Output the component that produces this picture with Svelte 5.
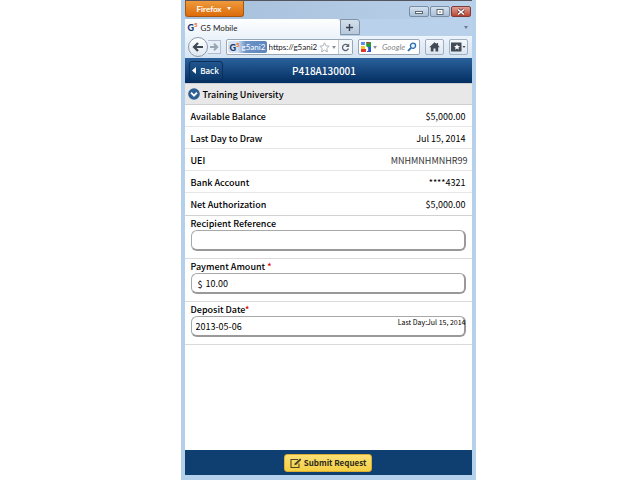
<script lang="ts">
  const details = [
    { label: 'Available Balance', value: '$5,000.00' },
    { label: 'Last Day to Draw', value: 'Jul 15, 2014' },
    { label: 'UEI', value: 'MNHMNHMNHR99', plain: true },
    { label: 'Bank Account', value: '****4321' },
    { label: 'Net Authorization', value: '$5,000.00' }
  ];

  let reference = $state('');
  let amount = $state('10.00');
  let depositDate = $state('2013-05-06');
  let query = $state('');
</script>

<div class="window">
  <div class="titlebar">
    <button class="firefox">Firefox <span class="caret light"></span></button>
    <div class="controls">
      <button aria-label="Minimize">
        <svg width="20" height="10" viewBox="0 0 20 10"><rect x="6.5" y="4.5" width="7" height="2" fill="#fff" stroke="#5d6875" /></svg>
      </button>
      <button aria-label="Maximize">
        <svg width="20" height="10" viewBox="0 0 20 10"><rect x="7" y="2.5" width="6" height="5" fill="#fff" stroke="#5d6875" /><rect x="9" y="4.5" width="2" height="1" fill="#5d6875" /></svg>
      </button>
      <button class="close" aria-label="Close">
        <svg width="20" height="10" viewBox="0 0 20 10"><path d="M7 2.5l6 5M13 2.5l-6 5" stroke="#6b3a3a" stroke-width="3" /><path d="M7 2.5l6 5M13 2.5l-6 5" stroke="#fff" stroke-width="1.6" /></svg>
      </button>
    </div>
  </div>

  <div class="tabs">
    <div class="tab"><span class="logo">G<sup>5</sup></span>G5 Mobile</div>
    <button class="new-tab" aria-label="New tab">
      <svg width="9" height="9" viewBox="0 0 9 9"><path d="M4.5 1v7M1 4.5h7" stroke="#38424e" stroke-width="1.4" /></svg>
    </button>
    <button class="all-tabs" aria-label="List all tabs"><span class="caret"></span></button>
  </div>

  <div class="toolbar">
    <button class="go-back" aria-label="Go back">
      <svg width="12" height="10" viewBox="0 0 12 10"><path d="M6 1L2 5l4 4M2.5 5H11" fill="none" stroke="#3f4954" stroke-width="2.2" /></svg>
    </button>
    <button class="go-forward" aria-label="Go forward">
      <svg width="10" height="8" viewBox="0 0 10 8"><path d="M5 .8L8.2 4 5 7.2M8 4H1" fill="none" stroke="#98a5b4" stroke-width="2" /></svg>
    </button>
    <div class="address">
      <span class="identity"><span class="logo">G<sup>5</sup></span>g5ani2</span>
      <input class="url" aria-label="Address" value="https://g5ani2" />
      <svg width="11" height="11" viewBox="0 0 11 11"><path d="M5.5 .8l1.4 3 3.3.4-2.4 2.3.6 3.3-2.9-1.6-2.9 1.6.6-3.3L.8 4.2l3.3-.4z" fill="#fff" stroke="#a5abb3" stroke-width=".9" /></svg>
      <span class="caret grey"></span>
      <button class="reload" aria-label="Reload">
        <svg width="9" height="9" viewBox="0 0 9 9"><path d="M6.8 2.2A3.1 3.1 0 1 0 7.5 5.6" fill="none" stroke="#59636f" stroke-width="1.3" /><path d="M8.2 .5v3.6H4.6z" fill="#59636f" /></svg>
      </button>
    </div>
    <div class="search">
      <svg width="10" height="10" viewBox="0 0 10 10"><path d="M0 0h4v3H0z" fill="#5b8def" /><path d="M5 0h5v5H5z" fill="#18a03f" /><path d="M0 4h4v3H0z" fill="#f6c42d" /><path d="M0 7h5v3H0z" fill="#e0362b" /><path d="M6 5h4v5H6z" fill="#2c55cf" /><path d="M6 0h2v2H6z" fill="#e0362b" /><path d="M4.500 1v3.500l2 1.500v3" fill="none" stroke="#fff" stroke-width="1.400" /></svg>
      <span class="caret grey"></span>
      <input aria-label="Search" placeholder="Google" bind:value={query} />
      <svg width="10" height="10" viewBox="0 0 10 10"><circle cx="6" cy="3.8" r="2.6" fill="#e6f1fb" stroke="#2b6bb0" stroke-width="1.3" /><path d="M4 5.8L1 9" stroke="#2b6bb0" stroke-width="1.8" /></svg>
    </div>
    <button class="tool" aria-label="Home">
      <svg width="11" height="10" viewBox="0 0 11 10"><path d="M5.5 .3L.3 5.2h1.5V9.6h2.7V6.5h2v3.1h2.7V5.2h1.5L9 3V1H7.6v.9z" fill="#414a55" /></svg>
    </button>
    <button class="tool" aria-label="Bookmarks">
      <svg width="15" height="10" viewBox="0 0 15 10"><path d="M0 .5h10.500v9H0z" fill="#414a55" /><path d="M6 2l.9 2 2.200.2-1.700 1.400.5 2.200L6 6.600 4.100 7.800l.5-2.200L2.900 4.200 5.100 4z" fill="#fff" /><path d="M11.500 4h3L13 6z" fill="#414a55" /></svg>
    </button>
  </div>

  <main>
    <header>
      <button class="back">
        <svg width="4" height="7" viewBox="0 0 4 7"><path d="M4 0v7L0 3.500z" fill="#fff" /></svg>
        Back
      </button>
      <h1>P418A130001</h1>
    </header>

    <h2>
      <svg width="12" height="12" viewBox="0 0 12 12"><circle cx="6" cy="6" r="5.800" fill="#2c5f94" /><path d="M3 4.600l3 3 3-3" fill="none" stroke="#fff" stroke-width="1.900" /></svg>
      Training University
    </h2>

    <dl>
      {#each details as item}
        <div class="row">
          <dt>{item.label}</dt>
          <dd class:plain={item.plain}>{item.value}</dd>
        </div>
      {/each}
    </dl>

    <form id="request" onsubmit={(e) => e.preventDefault()}>
      <div class="field">
        <label for="reference">Recipient Reference</label>
        <div class="box"><input id="reference" bind:value={reference} /></div>
      </div>
      <div class="field">
        <label for="amount">Payment Amount <span class="required">*</span></label>
        <div class="box money"><span>$</span><input id="amount" bind:value={amount} /></div>
      </div>
      <div class="field">
        <label for="deposit">Deposit Date<span class="required">*</span></label>
        <div class="box">
          <input id="deposit" bind:value={depositDate} />
          <span class="hint">Last Day:Jul 15, 2014</span>
        </div>
      </div>
    </form>

    <footer>
      <button class="submit" form="request">
        <svg width="12" height="10" viewBox="0 0 12 10"><path d="M8 1.500H1v8h8V5.500" fill="none" stroke="#4b4423" stroke-width="1.100" /><path d="M4.300 7.300l.6-2.100L10 .5l1.400 1.300-5.100 4.900z" fill="#4b4423" /></svg>
        Submit Request
      </button>
    </footer>
  </main>
</div>

<style>
:global(body) {
  background: #fff;
}

.window {
  box-sizing: border-box;
  display: flex;
  flex-direction: column;
  width: 100%;
  max-width: 295px;
  min-height: 100vh;
  margin: 0 auto;
  border: solid #b5d0ea;
  border-width: 0 4px 5px;
  background: #b9d1ea;
  box-shadow: inset 0 -1px #35595f;
  font-family: Lato, sans-serif;
  font-size: 8px;
  color: #1b1b1b;
}

@media (min-width: 400px) {
  .window {
    position: relative;
    left: 8px;
  }
}

button, input {
  box-sizing: border-box;
  margin: 0;
  padding: 0;
  font: inherit;
  color: inherit;
}

input {
  min-width: 0;
  border: 0;
  outline: 0;
  background: none;
}

svg {
  display: block;
  flex: none;
}

.caret {
  flex: none;
  border: 2px solid transparent;
  border-top: 3px solid #6c7b8c;
  border-bottom: 0;
}

.caret.light {
  border-top-color: #fff;
}

.caret.grey {
  border-top-color: #8b9199;
}

.logo {
  font-size: 9px;
  font-weight: 900;
  color: #17376f;
}

.logo sup {
  font-size: 6px;
  line-height: 0;
  color: #ee6b25;
}

/* browser chrome */
.titlebar {
  display: flex;
  justify-content: space-between;
  height: 19px;
  background: linear-gradient(90deg, #a6bfda, #b9d0e9);
  border-top: 1px solid #55545c;
  box-sizing: border-box;
}

.firefox {
  display: flex;
  align-items: center;
  justify-content: center;
  gap: 6px;
  width: 59px;
  height: 16px;
  border: 1px solid #a9550f;
  border-top: 0;
  border-radius: 0 0 3px 3px;
  background: linear-gradient(#ee9a3c, #dd6c0b);
  font-weight: 700;
  color: #fff;
}

.controls {
  display: flex;
  gap: 1px;
  padding-top: 5px;
  padding-right: 1px;
}

.controls button {
  display: flex;
  align-items: center;
  justify-content: center;
  width: 20px;
  height: 11px;
  overflow: hidden;
  border: 1px solid #7a8da4;
  border-radius: 2px;
  background: linear-gradient(#d4e1ef, #a9bfd6);
}

.controls .close {
  border-color: #7c3a38;
  background: linear-gradient(#dda096, #bd4431);
}

.tabs {
  display: flex;
  height: 17px;
}

.tab {
  display: flex;
  flex: 1;
  align-items: center;
  gap: 3px;
  padding-left: 3px;
  border-radius: 0 3px 0 0;
  background: linear-gradient(#fdfeff, #eef4fa);
}

.new-tab {
  display: flex;
  align-items: center;
  justify-content: center;
  width: 20px;
  height: 16px;
  border: 1px solid #8093a8;
  border-radius: 0 3px 0 0;
  background: linear-gradient(#d3dfeb, #b8c9dc);
}

.all-tabs {
  display: flex;
  align-items: center;
  justify-content: flex-end;
  width: 112px;
  padding-right: 4px;
  border: 0;
  background: none;
}

.toolbar {
  display: flex;
  align-items: center;
  gap: 5px;
  height: 22px;
  padding: 0 4px 0 3px;
  background: linear-gradient(#edf4fb, #d5e3f2);
}

.go-back {
  display: flex;
  align-items: center;
  justify-content: center;
  width: 20px;
  height: 20px;
  border: 1px solid #8e9aa8;
  border-radius: 50%;
  background: linear-gradient(#fff, #dfe7f0);
}

.go-forward {
  display: flex;
  align-items: center;
  justify-content: center;
  width: 13px;
  height: 14px;
  margin-left: -5px;
  border: 1px solid #b0bccb;
  border-left: 0;
  background: #e6eef7;
}

.address, .search {
  display: flex;
  align-items: center;
  box-sizing: border-box;
  height: 16px;
  border: 1px solid #98a6b6;
  border-radius: 2px;
  background: #fff;
}

.address {
  flex: 1;
  gap: 2px;
}

.identity {
  display: flex;
  align-items: center;
  gap: 2px;
  flex: none;
  width: 39px;
  height: 12px;
  box-sizing: border-box;
  margin-left: 1px;
  padding-left: 2px;
  border-radius: 2px;
  background: linear-gradient(90deg, #d5e2f1 25%, #6d94c8 45%, #5c85bd);
  color: #fff;
}

.url {
  flex: 1;
  width: 0;
}

.reload {
  display: flex;
  align-items: center;
  justify-content: center;
  width: 14px;
  height: 14px;
  border: 0;
  border-left: 1px solid #c3cbd4;
  background: #f4f7fa;
}

.search {
  flex: none;
  width: 22%;
  gap: 2px;
  padding: 0 2px;
}

.search input {
  flex: 1;
  width: 0;
  padding-left: 3px;
  font-style: italic;
}

.search input::placeholder {
  color: #85888c;
  opacity: 1;
}

.tool {
  display: flex;
  align-items: center;
  justify-content: center;
  width: 19px;
  height: 16px;
  border: 1px solid #a1afc0;
  border-radius: 2px;
  background: linear-gradient(#f6f9fc, #dbe5f0);
}

/* page */
main {
  display: flex;
  flex: 1;
  flex-direction: column;
  background: #fff;
  font-family: "Noto Sans CJK SC", "Noto Sans CJK JP", sans-serif;
  font-size: 9px;
  font-weight: 500;
  color: #000;
}

header {
  display: grid;
  grid-template-columns: 1fr auto 1fr;
  align-items: center;
  height: 25px;
  padding: 0 12px 0 4px;
  background: linear-gradient(#2b619b, #022e61);
  color: #fff;
}

.back {
  display: flex;
  align-items: center;
  justify-content: center;
  justify-self: start;
  gap: 4px;
  width: 34px;
  height: 20px;
  border: 1px solid #0c2f5c;
  border-radius: 3px;
  background: linear-gradient(#21568e, #093869);
  font-size: 8px;
}

h1 {
  margin: 0;
  font-size: 10px;
  font-weight: 500;
  line-height: 16px;
}

h2 {
  display: flex;
  align-items: center;
  gap: 3px;
  height: 20px;
  margin: 0;
  padding: 0 3px;
  border: solid #cfcfcf;
  border-width: 1px 0;
  background: #e8e8e8;
  font-size: 9px;
  font-weight: 500;
}

dl {
  margin: 0;
  border-bottom: 1px solid #d2d2d2;
}

.row {
  display: flex;
  align-items: center;
  justify-content: space-between;
  box-sizing: border-box;
  height: 22px;
  padding: 2px 6px 0;
  border-bottom: 1px solid #e6e6e6;
  line-height: 16px;
}

.row:last-child {
  border-bottom: 0;
}

dd {
  margin: 0;
  font-weight: 400;
}

dd.plain {
  margin-right: -2px;
  color: #333;
}

.field {
  box-sizing: border-box;
  height: 43px;
  padding: 0 6px;
  border-bottom: 1px solid #dadada;
}

label {
  display: block;
  padding-top: 2px;
  line-height: 12px;
}

.required {
  color: #e00000;
}

.box {
  position: relative;
  display: flex;
  align-items: center;
  box-sizing: border-box;
  height: 21px;
  padding: 2px 4px 0;
  border: 1px solid #a8a8a8;
  border-right: 2px solid #999;
  border-bottom: 2px solid #999;
  border-radius: 6px;
}

.box input {
  flex: 1;
  font-weight: 400;
  line-height: 16px;
}

.money {
  gap: 3px;
  padding-left: 6px;
}

.money span {
  font-weight: 400;
}

.hint {
  position: absolute;
  top: 0;
  right: -2px;
  font-size: 7px;
  font-weight: 400;
  line-height: 10px;
}

footer {
  display: flex;
  align-items: center;
  justify-content: center;
  height: 25px;
  margin-top: auto;
  background: #0f3f70;
}

.submit {
  display: flex;
  align-items: center;
  justify-content: center;
  gap: 2px;
  width: 88px;
  height: 18px;
  border: 1px solid #dcae30;
  border-radius: 3px;
  background: linear-gradient(#fbe077, #f5cf45);
  font-size: 8px;
  font-weight: 700;
  color: #2e2a1a;
}
</style>
